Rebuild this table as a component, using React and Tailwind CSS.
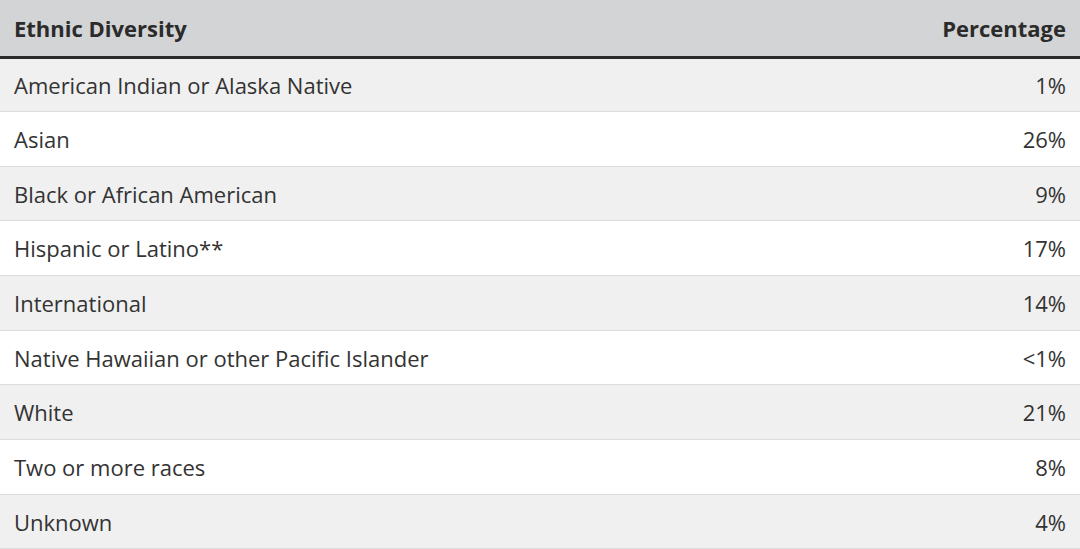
const rows = [
  ["American Indian or Alaska Native", "1%"],
  ["Asian", "26%"],
  ["Black or African American", "9%"],
  ["Hispanic or Latino**", "17%"],
  ["International", "14%"],
  ["Native Hawaiian or other Pacific Islander", "<1%"],
  ["White", "21%"],
  ["Two or more races", "8%"],
  ["Unknown", "4%"],
]

export default function App() {
  return (
    <div className="w-[1080px] h-[549px] overflow-hidden bg-white font-['Open_Sans',sans-serif] text-[#333]">
      <table className="w-full border-collapse">
        <thead>
          <tr className="bg-[#d3d4d5] border-b-[3px] border-[#2b2b2b]">
            <th className="h-[57px] px-[14px] pt-[1px] text-left text-[22px] font-bold text-[#2b2b2b]">
              Ethnic Diversity
            </th>
            <th className="h-[57px] px-[14px] pt-[1px] text-right text-[22px] font-bold text-[#2b2b2b]">
              Percentage
            </th>
          </tr>
        </thead>
        <tbody>
          {rows.map(([name, pct], i) => (
            <tr
              key={name}
              className={[
                "border-b border-[#dcdcdc]",
                i % 2 === 0 ? "bg-[#f0f0f0]" : "bg-white",
              ].join(" ")}
            >
              <td className="h-[54.67px] px-[14px] pt-[1px] text-left text-[22px]">{name}</td>
              <td className="h-[54.67px] px-[14px] pt-[1px] text-right text-[22px]">{pct}</td>
            </tr>
          ))}
        </tbody>
      </table>
    </div>
  )
}
